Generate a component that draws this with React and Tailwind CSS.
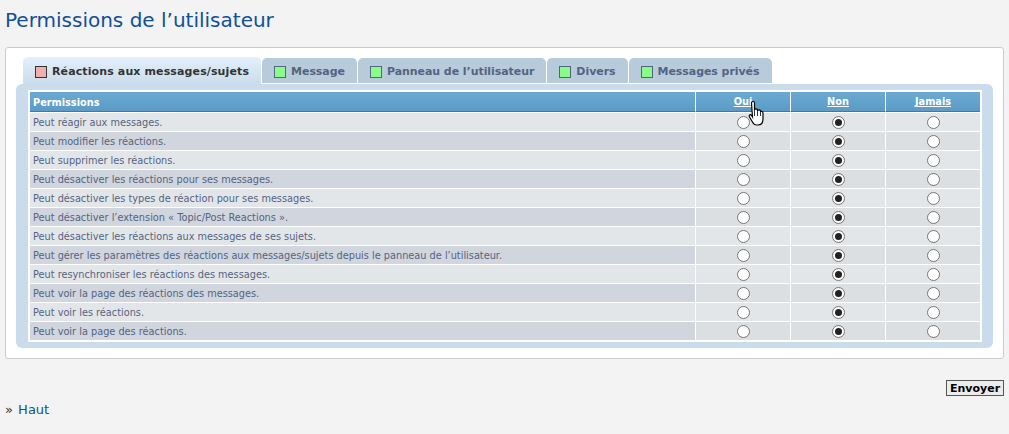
const tabs = [
  { label: "Réactions aux messages/sujets", active: true },
  { label: "Message" },
  { label: "Panneau de l’utilisateur" },
  { label: "Divers" },
  { label: "Messages privés" },
];

const rows = [
  "Peut réagir aux messages.",
  "Peut modifier les réactions.",
  "Peut supprimer les réactions.",
  "Peut désactiver les réactions pour ses messages.",
  "Peut désactiver les types de réaction pour ses messages.",
  "Peut désactiver l’extension « Topic/Post Reactions ».",
  "Peut désactiver les réactions aux messages de ses sujets.",
  "Peut gérer les paramètres des réactions aux messages/sujets depuis le panneau de l’utilisateur.",
  "Peut resynchroniser les réactions des messages.",
  "Peut voir la page des réactions des messages.",
  "Peut voir les réactions.",
  "Peut voir la page des réactions.",
];

const Radio = ({ checked }) => (
  <span className="flex h-[13px] w-[13px] items-center justify-center rounded-full border border-[#767676] bg-white">
    {checked && <span className="h-[7px] w-[7px] rounded-full bg-[#222]" />}
  </span>
);

const Tab = ({ label, active }) => (
  <div
    className={`flex items-center rounded-t-[5px] px-[12px] pt-[3px] font-bold ${
      active
        ? "h-[27px] bg-gradient-to-b from-[#e4f0fc] to-[#cadceb] tracking-[0.12px] text-[#333]"
        : "mb-px h-[25px] bg-[#b8cbdb] tracking-[-0.06px] text-[#536482]"
    }`}
  >
    <span
      className={`mr-[5px] h-[12px] w-[12px] border ${
        active ? "border-[#333] bg-[#f0b0b0]" : "border-[#536482] bg-[#88fb88]"
      }`}
    />
    {label}
  </div>
);

const HeadLink = ({ children }) => (
  <th className="w-[95px] border-b border-l border-b-[#3a7ba8] border-l-white p-0 pt-[2px] text-center font-bold">
    <a href="#" className="text-white underline">
      {children}
    </a>
  </th>
);

export default function App() {
  return (
    <div className="h-[434px] overflow-hidden bg-[#f3f3f3] px-[5px] font-['DejaVu_Sans',sans-serif]">
      <h1 className="pt-[7px] text-[20px] leading-[26px] font-normal text-[#115098]">
        Permissions de l’utilisateur
      </h1>

      <div className="mt-[14px] h-[312px] rounded-[3px] border border-[#ccc] bg-white px-[10px] pt-[9px]">
        <div className="flex items-end gap-px pl-[7px] text-[11px]">
          {tabs.map((tab) => (
            <Tab key={tab.label} {...tab} />
          ))}
        </div>

        <div className="h-[264px] rounded-[6px] bg-[#cadceb] px-[12px] pt-[6px]">
          <table className="w-[954px] table-fixed border-separate border-spacing-0 border-2 border-white text-[9.75px] text-[#536482]">
            <thead>
              <tr className="h-[20px] bg-gradient-to-b from-[#6aaad2] to-[#5a9ac5]">
                <th className="border-b border-[#3a7ba8] pt-[3px] pl-[3px] text-left font-bold text-white">
                  Permissions
                </th>
                <HeadLink>Oui</HeadLink>
                <HeadLink>Non</HeadLink>
                <HeadLink>Jamais</HeadLink>
              </tr>
            </thead>
            <tbody>
              {rows.map((text, i) => {
                const even = i % 2 === 0;
                const side = even ? "bg-[#e3e6e9]" : "bg-[#dcdfe2]";
                return (
                  <tr key={text} className="h-[19px]">
                    <td className={`border-t border-white pt-[2px] pl-[3px] ${even ? "bg-[#e3e6e9]" : "bg-[#d1d5dd]"}`}>
                      {text}
                    </td>
                    {[false, true, false].map((checked, c) => (
                      <td key={c} className={`border-t border-l border-white p-0 ${side}`}>
                        <div className="flex justify-center">
                          <Radio checked={checked} />
                        </div>
                      </td>
                    ))}
                  </tr>
                );
              })}
            </tbody>
          </table>
        </div>
      </div>

      <div className="mt-[21px] flex justify-end">
        <button className="h-[16px] w-[58px] border border-[#555] bg-[#ececec] p-0 text-center text-[11px] leading-none font-bold text-black">
          Envoyer
        </button>
      </div>
      <p className="mt-[6px] text-[13px] leading-[16px] text-[#105289]">
        <span className="mr-[1px] text-[#333]">»</span> Haut
      </p>

      {/* mouse pointer over the Oui header */}
      <svg className="absolute top-[100px] left-[748px]" width="17" height="28" viewBox="0 0 16 28">
        <path
          d="M3 3c0-2 3-2 3 0v7c0-1.500 3-1.500 3 0v1c0-1.500 3-1.500 3 0v1c0-1 2.500-1 2.500 1v6c0 3-1.500 6-5 6H8c-2 0-3-1-4-3l-3-5c-1-2 1-3 2-1.500l1 1.500Z"
          fill="#fff"
          stroke="#000"
          strokeWidth="1.200"
        />
        <path d="M6 10v6M9 11v5M12 12v4" stroke="#000" strokeWidth="0.8" />
      </svg>
    </div>
  );
}
